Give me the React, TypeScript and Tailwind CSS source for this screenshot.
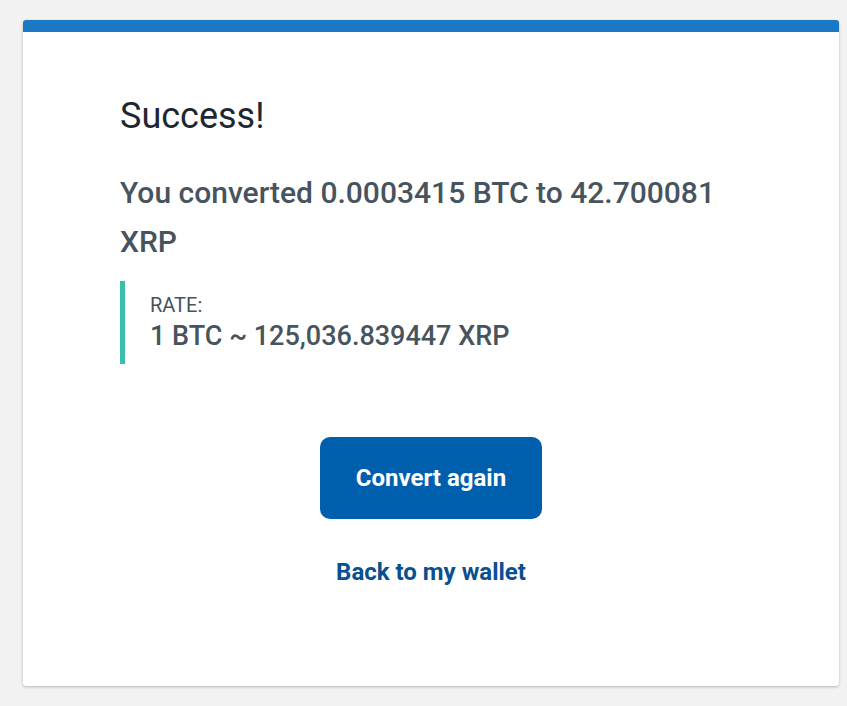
export default function App() {
  return (
    <div className="h-[706px] overflow-hidden bg-[#f2f2f2] pl-[23px] pr-[8px] pt-[20px] font-['Roboto',sans-serif]">
      <div className="h-[666px] overflow-hidden rounded-[3px] bg-white shadow-[0_1px_3px_rgba(0,0,0,0.25)]">
        <div className="h-[12px] bg-[#1a78c4]" />
        <div className="flex flex-col px-[97px] pt-[62px]">
          <h1 className="text-[36px] font-normal leading-[44px] text-[#1d2731]">Success!</h1>
          <p className="mt-[30px] text-[30px] font-medium leading-[49px] text-[#47535d]">
            You converted 0.0003415 BTC to 42.700081 XRP
          </p>
          <div className="mt-[15px] border-l-[5px] border-[#3bbfad] pl-[25px] pt-[11px] pb-[10px]">
            <div className="text-[20px] leading-[26px] text-[#47535d]">RATE:</div>
            <div className="text-[27px] font-medium leading-[36px] text-[#47535d]">
              1 BTC ~ 125,036.839447 XRP
            </div>
          </div>
          <div className="mt-[73px] flex flex-col items-center">
            <button className="h-[82px] w-[222px] rounded-[10px] bg-[#005fad] text-[24px] font-bold text-white">
              Convert again
            </button>
            <a className="mt-[38px] text-[24px] font-bold leading-[30px] text-[#0a4f8f]">Back to my wallet</a>
          </div>
        </div>
      </div>
    </div>
  );
}
